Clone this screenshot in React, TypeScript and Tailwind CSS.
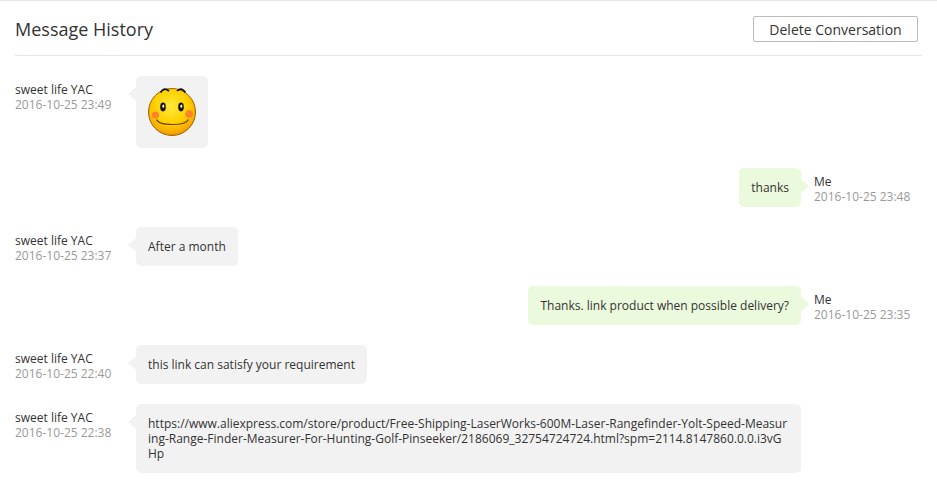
import React from "react";

function Smiley() {
  return (
    <svg width="48" height="48" viewBox="0 0 48 48" className="block overflow-visible">
      <defs>
        <radialGradient id="f" cx="48%" cy="38%" r="66%">
          <stop offset="0%" stopColor="#ffe93a" />
          <stop offset="55%" stopColor="#ffd000" />
          <stop offset="82%" stopColor="#f8ad00" />
          <stop offset="100%" stopColor="#e08a00" />
        </radialGradient>
      </defs>
      <circle cx="24" cy="24" r="23.5" fill="url(#f)" stroke="#9a6406" strokeWidth="1" />
      <circle cx="7.5" cy="27" r="3.6" fill="#f9703a" opacity="0.8" />
      <circle cx="41" cy="26" r="3.8" fill="#f9703a" opacity="0.8" />
      <ellipse cx="15" cy="19" rx="2.8" ry="4.4" fill="#17110a" />
      <ellipse cx="33" cy="19" rx="2.8" ry="4.4" fill="#17110a" />
      <ellipse cx="15.3" cy="18.2" rx="1" ry="1.6" fill="#fff" />
      <ellipse cx="33.3" cy="18.2" rx="1" ry="1.6" fill="#fff" />
      <path d="M12.5 4.5 Q16 -1.5 21 3" fill="none" stroke="#17110a" strokeWidth="1.7" />
      <path d="M29 3 Q33.5 -1.5 37.5 4.5" fill="none" stroke="#17110a" strokeWidth="1.7" />
      <path d="M8.5 31.5 Q10 36.5 25 36.5 Q38 36.5 40.5 31.5" fill="none" stroke="#6e4505" strokeWidth="1.2" />
    </svg>
  );
}

function Received({ name, time, children }: { name: string; time: string; children: React.ReactNode }) {
  return (
    <div className="flex items-start">
      <div className="w-[121px] shrink-0 pt-[6px] text-[12px] leading-[15px] whitespace-nowrap">
        <div className="text-[#333]">{name}</div>
        <div className="text-[#999]">{time}</div>
      </div>
      <div className="relative max-w-[665px] rounded-[5px] bg-[#f2f2f2] p-3 text-[12px] leading-[15px] text-[#333] break-all">
        <span className="absolute left-[-8px] top-[11px] h-0 w-0 border-y-[7px] border-r-[8px] border-y-transparent border-r-[#f2f2f2]" />
        {children}
      </div>
    </div>
  );
}

function Sent({ time, children }: { time: string; children: React.ReactNode }) {
  return (
    <div className="flex items-start justify-end">
      <div className="relative rounded-[5px] bg-[#ebf9dc] p-3 text-[12px] leading-[15px] text-[#333]">
        <span className="absolute right-[-8px] top-[11px] h-0 w-0 border-y-[7px] border-l-[8px] border-y-transparent border-l-[#ebf9dc]" />
        {children}
      </div>
      <div className="ml-[13px] w-[108px] shrink-0 pt-[6px] text-[12px] leading-[15px] whitespace-nowrap">
        <div className="text-[#333]">Me</div>
        <div className="text-[#999]">{time}</div>
      </div>
    </div>
  );
}

export default function App() {
  return (
    <div className="h-[487px] w-[937px] overflow-hidden border-t border-[#e5e5e5] bg-white px-[15px] font-['Open_Sans',sans-serif]">
      <div className="flex h-[55px] items-start justify-between border-b border-[#e5e5e5] pr-[4px]">
        <h1 className="mt-[14px] text-[18px] leading-[28px] font-normal text-[#333]">Message History</h1>
        <button className="mt-[15px] flex h-[26px] w-[165px] items-center justify-center rounded-[2px] border border-[#bbb] bg-white pt-[2px] text-[14px] leading-[20px] text-[#333]">
          Delete Conversation
        </button>
      </div>
      <div className="flex flex-col gap-5 pt-5">
        <Received name="sweet life YAC" time="2016-10-25 23:49">
          <Smiley />
        </Received>
        <Sent time="2016-10-25 23:48">thanks</Sent>
        <Received name="sweet life YAC" time="2016-10-25 23:37">After a month</Received>
        <Sent time="2016-10-25 23:35">Thanks. link product when possible delivery?</Sent>
        <Received name="sweet life YAC" time="2016-10-25 22:40">this link can satisfy your requirement</Received>
        <Received name="sweet life YAC" time="2016-10-25 22:38">
          https://www.aliexpress.com/store/product/Free-Shipping-LaserWorks-600M-Laser-Rangefinder-Yolt-Speed-Measuring-Range-Finder-Measurer-For-Hunting-Golf-Pinseeker/2186069_32754724724.html?spm=2114.8147860.0.0.i3vGHp
        </Received>
      </div>
    </div>
  );
}
